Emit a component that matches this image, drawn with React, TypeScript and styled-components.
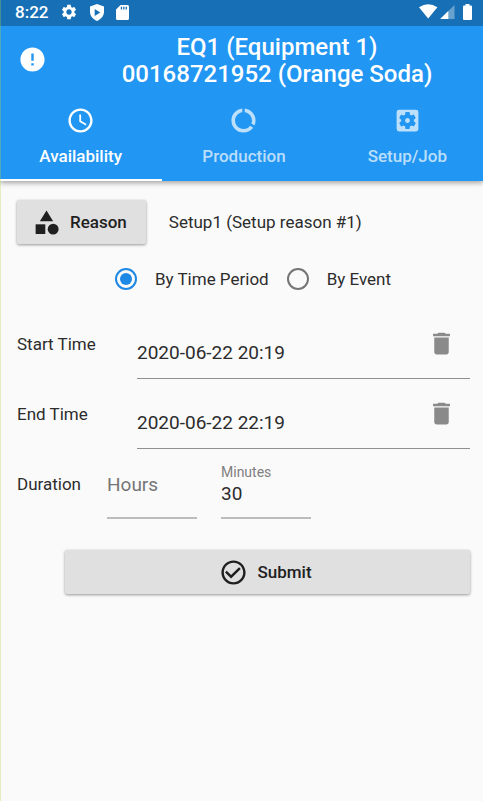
import React, { useState } from "react";
import styled, { createGlobalStyle } from "styled-components";
import {
  MdAccessTime,
  MdCategory,
  MdCheckCircleOutline,
  MdDataUsage,
  MdDelete,
  MdError,
  MdSettings,
  MdSettingsApplications,
} from "react-icons/md";

const GlobalStyle = createGlobalStyle`
  *, *::before, *::after { box-sizing: border-box; }
  body { margin: 0; background: #fafafa; }
  button, input { font: inherit; color: inherit; }
`;

const Screen = styled.div`
  position: relative;
  min-height: 100vh;
  padding-left: 1px;
  overflow-x: clip;
  background: #fafafa;
  color: #2c2c2c;
  font-family: Roboto, "Liberation Sans", sans-serif;
  font-size: 17px;
  line-height: 20px;

  &::before {
    content: "";
    position: absolute;
    z-index: 2;
    inset: 0 auto 0 0;
    width: 1px;
    background: rgba(180, 215, 60, 0.3);
  }
`;

const AppBar = styled.header`
  margin-left: -1px;
  padding-left: 1px;
  background: #2196f3;
  color: #fff;
  box-shadow: 0 2px 5px rgba(0, 0, 0, 0.35);
`;

const StatusBar = styled.div`
  display: flex;
  align-items: center;
  justify-content: space-between;
  height: 26px;
  margin-left: -1px;
  padding: 0 10px 2px 15px;
  background: #1770b6;
`;

const StatusGroup = styled.div`
  display: flex;
  align-items: center;
  gap: 12px;
`;

const Clock = styled.time`
  font-weight: 500;
`;

const TitleRow = styled.div`
  display: flex;
  align-items: center;
  height: 67px;
`;

const IconButton = styled.button<{ $width: number }>`
  display: flex;
  flex: none;
  align-items: center;
  justify-content: center;
  width: ${(p) => p.$width}px;
  height: 48px;
  padding: 0;
  border: 0;
  background: none;
  cursor: pointer;
`;

const Title = styled.h1`
  flex: 1;
  margin: 0;
  padding-top: 2px;
  text-align: center;
  font-size: 24px;
  font-weight: 500;
  line-height: 27px;
`;

const LeadingSlot = styled.div`
  flex: none;
  width: 70px;
  padding-right: 8px;
`;

const Tabs = styled.div`
  display: grid;
  grid-template-columns: repeat(3, 1fr);
  margin: 0 -6px 0 -2px;
`;

const Tab = styled.button<{ $active: boolean }>`
  display: flex;
  flex-direction: column;
  align-items: center;
  gap: 11px;
  height: 88px;
  padding: 13px 0 0;
  border: 0;
  border-bottom: 2px solid ${(p) => (p.$active ? "#fff" : "transparent")};
  background: none;
  color: ${(p) => (p.$active ? "#fff" : "rgba(255, 255, 255, 0.7)")};
  font-weight: 500;
  cursor: pointer;
`;

const Form = styled.form`
  padding: 19px 13px 24px 16px;
`;

const ReasonRow = styled.div`
  display: flex;
  align-items: center;
  gap: 23px;
`;

const RaisedButton = styled.button`
  display: flex;
  align-items: center;
  justify-content: center;
  gap: 9px;
  height: 44px;
  padding: 0 19px 0 15px;
  border: 0;
  border-radius: 2px;
  background: #e0e0e0;
  color: #1f1f1f;
  font-weight: 500;
  box-shadow: 0 1px 3px rgba(0, 0, 0, 0.4);
  cursor: pointer;
`;

const RadioRow = styled.div`
  display: flex;
  align-items: center;
  justify-content: center;
  gap: 18px;
  height: 46px;
  margin: 12px 0 7px;
  padding-left: 19px;
`;

const RadioLabel = styled.label`
  display: flex;
  align-items: center;
  gap: 18px;
  cursor: pointer;
`;

const Radio = styled.input`
  display: grid;
  place-content: center;
  appearance: none;
  width: 22px;
  height: 22px;
  margin: 0;
  border: 2px solid #757575;
  border-radius: 50%;

  &:checked {
    border-color: #1e88e5;
  }

  &:checked::before {
    content: "";
    width: 12px;
    height: 12px;
    border-radius: 50%;
    background: #1e88e5;
  }
`;

const FieldRow = styled.div<{ $labelWidth: number }>`
  display: grid;
  grid-template-columns: ${(p) => p.$labelWidth}px 1fr;
  align-items: center;
  height: 70px;
`;

const DateBox = styled.div`
  display: flex;
  align-items: center;
  height: 70px;
  border-bottom: 1px solid #8f8f8f;
  color: #8a8a8a;
`;

const DateInput = styled.input`
  flex: 1;
  min-width: 0;
  height: 48px;
  padding: 18px 0 0;
  border: 0;
  outline: 0;
  background: none;
  color: #2c2c2c;
  font-size: 19px;
`;

const DurationFields = styled.div`
  display: flex;
  gap: 24px;
`;

const NumberBox = styled.div`
  display: flex;
  flex-direction: column;
  justify-content: center;
  width: 90px;
  height: 70px;
  padding-top: 2px;
  border-bottom: 2px solid #bcbcbc;
`;

const FloatingLabel = styled.label`
  color: #808080;
  font-size: 14px;
  line-height: 18px;
`;

const NumberInput = styled.input`
  width: 100%;
  height: 24px;
  padding: 0;
  border: 0;
  outline: 0;
  background: none;
  font-size: 19px;

  &::placeholder {
    color: #757575;
    opacity: 1;
  }
`;

const SubmitRow = styled.div`
  display: grid;
  margin: 31px 0 0 48px;
`;

const tabs = [
  { name: "Availability", Icon: MdAccessTime },
  { name: "Production", Icon: MdDataUsage },
  { name: "Setup/Job", Icon: MdSettingsApplications },
];

const ShieldIcon = () => (
  <svg width="14" height="17" viewBox="0 0 14 17" aria-hidden="true">
    <path
      fill="#fff"
      fillRule="evenodd"
      d="M7 0 0 2.6v5.2c0 4 2.8 7.4 7 9.2 4.2-1.8 7-5.2 7-9.2V2.6L7 0ZM4.7 5v7l5.600-3.500Z"
    />
  </svg>
);

const SdCardIcon = () => (
  <svg width="13" height="15" viewBox="0 0 13 15" aria-hidden="true">
    <path
      fill="#fff"
      fillRule="evenodd"
      d="M4.5 0H11.5Q13 0 13 1.5V13.5Q13 15 11.5 15H1.5Q0 15 0 13.5V4.5ZM4.8 1.7V4.5H6.1V1.7ZM7.2 1.7V4.5H8.5V1.7ZM9.6 1.7V4.5H10.9V1.7Z"
    />
  </svg>
);

const SystemIcons = () => (
  <svg width="54" height="16" viewBox="0 0 54 16" aria-hidden="true">
    <path fill="#fff" d="M0 3.3Q9.2-2.8 18.4 3.3L9.2 14.5Z" />
    <path fill="#fff" fillOpacity="0.35" d="M35.500 1V15H21.200Z" />
    <path fill="#fff" d="M29.3 7.1V15H21.2Z" />
    <path
      fill="#fff"
      d="M46.5 0h4v1.5h1.500q1 0 1 1v12.500q0 1-1 1h-7q-1 0-1-1V2.500q0-1 1-1h1.500Z"
    />
  </svg>
);

interface DateFieldProps {
  id: string;
  label: string;
  initial: string;
}

function DateField({ id, label, initial }: DateFieldProps) {
  const [value, setValue] = useState(initial);
  return (
    <FieldRow $labelWidth={120}>
      <label htmlFor={id}>{label}</label>
      <DateBox>
        <DateInput id={id} value={value} onChange={(e) => setValue(e.target.value)} />
        <IconButton
          type="button"
          $width={58}
          aria-label={`Clear ${label}`}
          onClick={() => setValue("")}
        >
          <MdDelete size={29} />
        </IconButton>
      </DateBox>
    </FieldRow>
  );
}

export default function App() {
  const [active, setActive] = useState("Availability");
  const [mode, setMode] = useState("period");

  return (
    <Screen>
      <GlobalStyle />
      <AppBar>
        <StatusBar>
          <StatusGroup>
            <Clock>8:22</Clock>
            <MdSettings size={18} />
            <ShieldIcon />
            <SdCardIcon />
          </StatusGroup>
          <SystemIcons />
        </StatusBar>
        <TitleRow>
          <LeadingSlot>
            <IconButton type="button" $width={62} aria-label="Alerts">
              <MdError size={29} />
            </IconButton>
          </LeadingSlot>
          <Title>
            EQ1 (Equipment 1)
            <br />
            00168721952 (Orange Soda)
          </Title>
        </TitleRow>
        <Tabs role="tablist">
          {tabs.map(({ name, Icon }) => (
            <Tab
              key={name}
              type="button"
              role="tab"
              aria-selected={active === name}
              $active={active === name}
              onClick={() => setActive(name)}
            >
              <Icon size={29} />
              {name}
            </Tab>
          ))}
        </Tabs>
      </AppBar>
      <Form onSubmit={(e) => e.preventDefault()}>
        <ReasonRow>
          <RaisedButton type="button">
            <MdCategory size={29} />
            Reason
          </RaisedButton>
          <span>Setup1 (Setup reason #1)</span>
        </ReasonRow>
        <RadioRow role="radiogroup" aria-label="Entry mode">
          <RadioLabel>
            <Radio
              type="radio"
              name="mode"
              checked={mode === "period"}
              onChange={() => setMode("period")}
            />
            By Time Period
          </RadioLabel>
          <RadioLabel>
            <Radio
              type="radio"
              name="mode"
              checked={mode === "event"}
              onChange={() => setMode("event")}
            />
            By Event
          </RadioLabel>
        </RadioRow>
        <DateField id="start" label="Start Time" initial="2020-06-22 20:19" />
        <DateField id="end" label="End Time" initial="2020-06-22 22:19" />
        <FieldRow $labelWidth={90} role="group" aria-labelledby="duration">
          <span id="duration">Duration</span>
          <DurationFields>
            <NumberBox>
              <NumberInput aria-label="Hours" placeholder="Hours" inputMode="numeric" />
            </NumberBox>
            <NumberBox>
              <FloatingLabel htmlFor="minutes">Minutes</FloatingLabel>
              <NumberInput id="minutes" defaultValue="30" inputMode="numeric" />
            </NumberBox>
          </DurationFields>
        </FieldRow>
        <SubmitRow>
          <RaisedButton type="submit">
            <MdCheckCircleOutline size={29} />
            Submit
          </RaisedButton>
        </SubmitRow>
      </Form>
    </Screen>
  );
}
